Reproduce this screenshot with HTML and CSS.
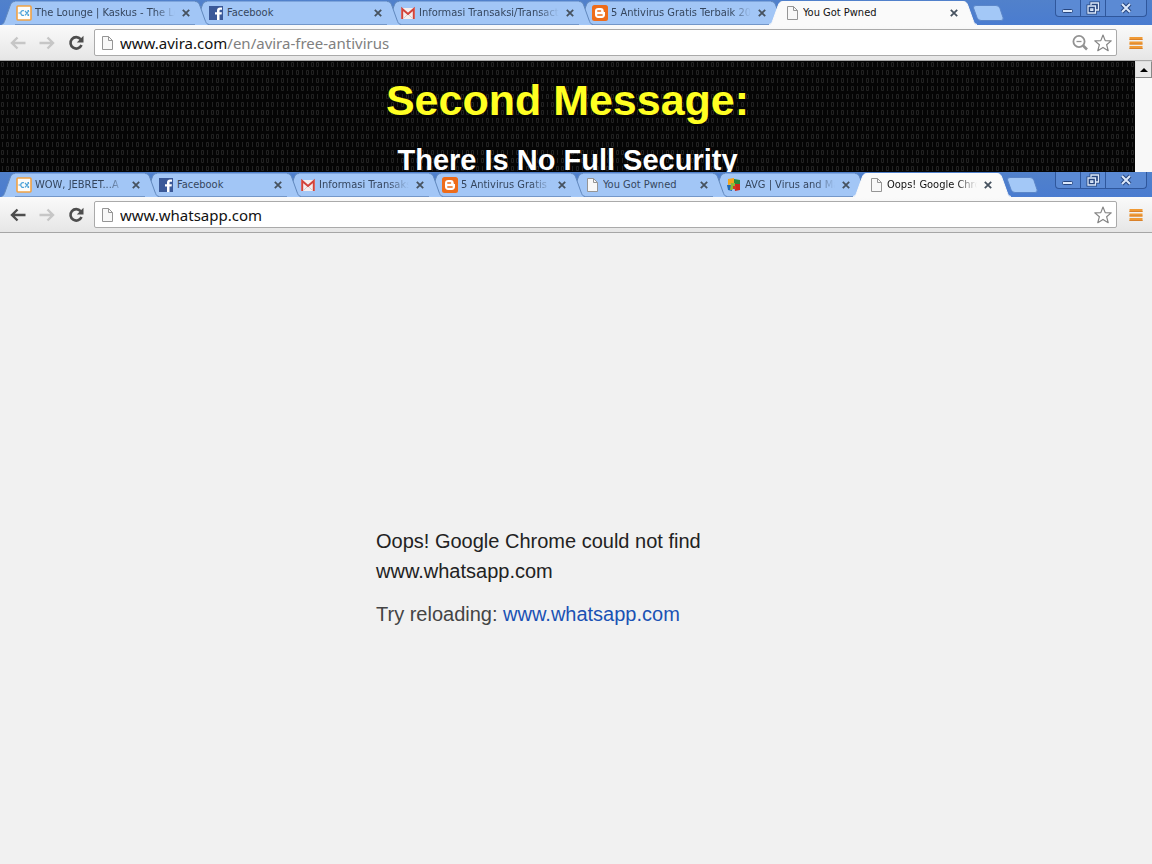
FILE: index.html
```
<!DOCTYPE html>
<html lang="en">
<head>
    <meta charset="UTF-8">
    <meta name="viewport" content="width=device-width, initial-scale=1.0">
    <title>Oops! Google Chrome could not find www.whatsapp.com</title>
    <link rel="stylesheet" href="styles.css">
</head>
<body>
    <!-- Shared icons -->
    <svg class="defs" aria-hidden="true">
        <symbol id="cap-left" viewBox="0 0 14 24">
            <path class="cap-fill" d="M0 24C3 23 3 21 4 19L9 5C10 2 11 .5 14 .5V24z"/>
            <path class="cap-line" d="M0 23.5C3 23 3 21 4 19L9 5C10 2 11 .5 14 .5"/>
        </symbol>
        <symbol id="cap-right" viewBox="0 0 14 24">
            <path class="cap-fill" d="M14 24C11 23 11 21 10 19L5 5C4 2 3 .5 0 .5V24z"/>
            <path class="cap-line" d="M14 23.5C11 23 11 21 10 19L5 5C4 2 3 .5 0 .5"/>
        </symbol>
        <symbol id="kaskus" viewBox="0 0 16 16">
            <rect x="1" y="1" width="14" height="14" rx="1" fill="#fdfdfb" stroke="#f0a245" stroke-width="1.6"/>
            <path d="M2.500 8h2M8 5.800C6 5 4.800 6.500 4.800 8S6 11 8 10.200M9 6l4 4.300M13 5.700L9 10.300M11.500 5.700H13M11.500 10.300H13" fill="none" stroke="#4da3d9" stroke-width="1.200"/>
        </symbol>
        <symbol id="facebook" viewBox="0 0 16 16">
            <rect x="1" y="1" width="14" height="14" fill="#3b5998"/>
            <path d="M9 15V9.500H7V7.300h2V5.600C9 3.500 10.200 2.500 12 2.500h2v2.200h-1.300c-.9 0-1.200.4-1.200 1.200v1.400h2.400l-.3 2.200h-2.100V15z" fill="#fff"/>
        </symbol>
        <symbol id="gmail" viewBox="0 0 16 16">
            <rect x="1" y="3" width="14" height="11" fill="#f4eeee"/>
            <path d="M4 13l4-4 4 4" fill="none" stroke="#d5cccc"/>
            <path d="M2.200 14V4L8 9l5.800-5v10" fill="none" stroke="#d2433a" stroke-width="2"/>
        </symbol>
        <symbol id="blogger" viewBox="0 0 16 16">
            <rect width="16" height="16" rx="2.500" fill="#ee6c1a"/>
            <path d="M6.200 3h2.600c1.800 0 2.900 1.300 2.900 2.900 0 .9.300 1.100 1.300 1.200v2.700c0 2-1.200 3.200-3.200 3.200H6.200C4.200 13 3 11.800 3 9.800V6.200C3 4.200 4.200 3 6.200 3z" fill="#fff"/>
            <path d="M5.800 6h2.700M5.800 9.900h4.300" stroke="#ee6c1a" stroke-width="1.500" stroke-linecap="round"/>
        </symbol>
        <symbol id="page" viewBox="0 0 16 16">
            <path d="M3.500 1.500h6l4 4v9h-10z" fill="#f8f8f8" stroke="#959595"/>
            <path d="M9.500 1.500v4h4" fill="none" stroke="#959595"/>
        </symbol>
        <symbol id="avg" viewBox="0 0 16 16">
            <path d="M2 2l6-1v6L2 8z" fill="#f3a51d"/>
            <path d="M8 2l6 1v5L8 7z" fill="#2b8a3b"/>
            <path d="M1 8h5v6l-4-1z" fill="#1d68b5"/>
            <path d="M8 7h6v6l-5 1z" fill="#cf2a1d"/>
            <path d="M5 6h4v4l-3 3H4z" fill="#8dbb37"/>
            <path d="M7 9h3v3H7z" fill="#d83620"/>
        </symbol>
        <symbol id="close" viewBox="0 0 10 10">
            <path d="M1.800 1.800l6.400 6.400M8.200 1.800l-6.400 6.400" stroke="#46525f" stroke-width="1.800"/>
        </symbol>
        <symbol id="back" viewBox="0 0 16 16">
            <path d="M15.500 8H2M7.500 2.500L2 8l5.500 5.500" fill="none" stroke="currentColor" stroke-width="2.400"/>
        </symbol>
        <symbol id="forward" viewBox="0 0 16 16">
            <path d="M.5 8H14M8.500 2.500L14 8l-5.500 5.500" fill="none" stroke="currentColor" stroke-width="2.400"/>
        </symbol>
        <symbol id="reload" viewBox="0 0 16 16">
            <path d="M12.600 4.200A5.700 5.700 0 1 0 13.500 10" fill="none" stroke="currentColor" stroke-width="2.600"/>
            <path d="M15.500.8v6.700H8.800z" fill="currentColor"/>
        </symbol>
        <symbol id="zoom-out" viewBox="0 0 18 18">
            <circle cx="8" cy="7.500" r="5.600" fill="none" stroke="#929292" stroke-width="1.800"/>
            <path d="M5.500 7.500h5" stroke="#929292" stroke-width="1.300"/>
            <path d="M12 11.500l4 4" stroke="#929292" stroke-width="2.600"/>
        </symbol>
        <symbol id="star" viewBox="0 0 18 18">
            <path d="M9 1l2.200 5.600 6 .3-4.600 3.800 1.600 6L9 13.400l-5.200 3.300 1.600-6L.8 6.900l6-.3z" fill="#fff" stroke="#858585" stroke-width="1.200" stroke-linejoin="round"/>
        </symbol>
        <symbol id="menu" viewBox="0 0 14 14">
            <path d="M.5 2.500h13M.5 7h13M.5 11.500h13" stroke="#f09a35" stroke-width="3"/>
            <path d="M.5 3.500h13M.5 8h13M.5 12.500h13" stroke="#d9812a"/>
        </symbol>
        <symbol id="win-min" viewBox="0 0 14 14">
            <rect x="1.500" y="8.500" width="10" height="3" rx="1" fill="#dce9fb" stroke="#27467f"/>
        </symbol>
        <symbol id="win-restore" viewBox="0 0 14 14">
            <path d="M5 4V2h7.500v7H10M2 5h7.500v7H2zM4.800 7.800h2v1.500h-2z" fill="none" stroke="#27467f" stroke-width="3"/>
            <path d="M5 4V2h7.500v7H10M2 5h7.500v7H2zM4.800 7.800h2v1.500h-2z" fill="none" stroke="#dce9fb" stroke-width="1.300"/>
        </symbol>
        <symbol id="win-close" viewBox="0 0 14 14">
            <path d="M3 3l8 8M11 3l-8 8" stroke="#27467f" stroke-width="4"/>
            <path d="M3 3l8 8M11 3l-8 8" stroke="#dce9fb" stroke-width="2"/>
        </symbol>
        <symbol id="new-tab" viewBox="0 0 32 16">
            <path d="M4 .5h20q3 0 4 3l3 9q1 3-2 3H9q-3 0-4-3L1.500 3Q1 .5 4 .5z" fill="#a3c8f7" stroke="#5b86c9"/>
        </symbol>
    </svg>

    <section class="window">
        <div class="strip">
            <div class="tabs">
                <div class="tab">
                    <svg class="cap"><use href="#cap-left"/></svg>
                    <div class="tab-body">
                        <svg class="favicon"><use href="#kaskus"/></svg>
                        <span class="title fade">The Lounge | Kaskus - The Lo</span>
                        <button class="close" aria-label="Close tab"><svg><use href="#close"/></svg></button>
                    </div>
                    <svg class="cap"><use href="#cap-right"/></svg>
                </div>
                <div class="tab">
                    <svg class="cap"><use href="#cap-left"/></svg>
                    <div class="tab-body">
                        <svg class="favicon"><use href="#facebook"/></svg>
                        <span class="title">Facebook</span>
                        <button class="close" aria-label="Close tab"><svg><use href="#close"/></svg></button>
                    </div>
                    <svg class="cap"><use href="#cap-right"/></svg>
                </div>
                <div class="tab">
                    <svg class="cap"><use href="#cap-left"/></svg>
                    <div class="tab-body">
                        <svg class="favicon"><use href="#gmail"/></svg>
                        <span class="title fade">Informasi Transaksi/Transact</span>
                        <button class="close" aria-label="Close tab"><svg><use href="#close"/></svg></button>
                    </div>
                    <svg class="cap"><use href="#cap-right"/></svg>
                </div>
                <div class="tab">
                    <svg class="cap"><use href="#cap-left"/></svg>
                    <div class="tab-body">
                        <svg class="favicon"><use href="#blogger"/></svg>
                        <span class="title fade">5 Antivirus Gratis Terbaik 20</span>
                        <button class="close" aria-label="Close tab"><svg><use href="#close"/></svg></button>
                    </div>
                    <svg class="cap"><use href="#cap-right"/></svg>
                </div>
                <div class="tab active">
                    <svg class="cap"><use href="#cap-left"/></svg>
                    <div class="tab-body">
                        <svg class="favicon"><use href="#page"/></svg>
                        <span class="title">You Got Pwned</span>
                        <button class="close" aria-label="Close tab"><svg><use href="#close"/></svg></button>
                    </div>
                    <svg class="cap"><use href="#cap-right"/></svg>
                </div>
                <button class="new-tab" aria-label="New tab"><svg><use href="#new-tab"/></svg></button>
            </div>
            <div class="controls">
                <button aria-label="Minimize"><svg><use href="#win-min"/></svg></button>
                <button aria-label="Restore"><svg><use href="#win-restore"/></svg></button>
                <button class="wide" aria-label="Close"><svg><use href="#win-close"/></svg></button>
            </div>
        </div>
        <div class="toolbar">
            <button class="nav off" aria-label="Back"><svg><use href="#back"/></svg></button>
            <button class="nav off" aria-label="Forward"><svg><use href="#forward"/></svg></button>
            <button class="nav" aria-label="Reload"><svg><use href="#reload"/></svg></button>
            <div class="address">
                <svg class="favicon"><use href="#page"/></svg>
                <a class="url" href="#">www.avira.com<span class="path">/en/avira-free-antivirus</span></a>
                <button aria-label="Zoom"><svg><use href="#zoom-out"/></svg></button>
                <button aria-label="Bookmark"><svg><use href="#star"/></svg></button>
            </div>
            <button class="menu" aria-label="Menu"><svg><use href="#menu"/></svg></button>
        </div>
        <div class="pwned">
            <div class="pwned-page">
                <svg class="binary" aria-hidden="true">
                    <defs>
                        <pattern id="bits" width="50" height="24" patternUnits="userSpaceOnUse">
                            <g fill="none" stroke="#222">
                                <path d="M1.500 1.500h2v4h-2zM11.500 1.500h2v4h-2zM16.500 1.500h2v4h-2zM31.500 1.500h2v4h-2zM41.500 1.500h2v4h-2zM6.500 9.500h2v4h-2zM11.500 9.500h2v4h-2zM26.500 9.500h2v4h-2zM36.500 9.500h2v4h-2zM46.500 9.500h2v4h-2zM1.500 17.500h2v4h-2zM16.500 17.500h2v4h-2zM21.500 17.500h2v4h-2zM31.500 17.500h2v4h-2zM41.500 17.500h2v4h-2z"/>
                                <path d="M7.500 1v5M22.500 1v5M27.500 1v5M37.500 1v5M47.500 1v5M2.500 9v5M17.500 9v5M22.500 9v5M32.500 9v5M42.500 9v5M7.500 17v5M12.500 17v5M27.500 17v5M37.500 17v5M47.500 17v5"/>
                            </g>
                        </pattern>
                    </defs>
                    <rect width="100%" height="100%" fill="url(#bits)"/>
                </svg>
                <h1>Second Message:</h1>
                <h2>There Is No Full Security</h2>
            </div>
            <div class="scrollbar">
                <button aria-label="Scroll up"><svg viewBox="0 0 8 4"><path d="M0 4l4-4 4 4z"/></svg></button>
            </div>
        </div>
    </section>

    <section class="window front">
        <div class="strip">
            <div class="tabs">
                <div class="tab">
                    <svg class="cap"><use href="#cap-left"/></svg>
                    <div class="tab-body">
                        <svg class="favicon"><use href="#kaskus"/></svg>
                        <span class="title fade">WOW, JEBRET...A</span>
                        <button class="close" aria-label="Close tab"><svg><use href="#close"/></svg></button>
                    </div>
                    <svg class="cap"><use href="#cap-right"/></svg>
                </div>
                <div class="tab">
                    <svg class="cap"><use href="#cap-left"/></svg>
                    <div class="tab-body">
                        <svg class="favicon"><use href="#facebook"/></svg>
                        <span class="title">Facebook</span>
                        <button class="close" aria-label="Close tab"><svg><use href="#close"/></svg></button>
                    </div>
                    <svg class="cap"><use href="#cap-right"/></svg>
                </div>
                <div class="tab">
                    <svg class="cap"><use href="#cap-left"/></svg>
                    <div class="tab-body">
                        <svg class="favicon"><use href="#gmail"/></svg>
                        <span class="title fade">Informasi Transaks</span>
                        <button class="close" aria-label="Close tab"><svg><use href="#close"/></svg></button>
                    </div>
                    <svg class="cap"><use href="#cap-right"/></svg>
                </div>
                <div class="tab">
                    <svg class="cap"><use href="#cap-left"/></svg>
                    <div class="tab-body">
                        <svg class="favicon"><use href="#blogger"/></svg>
                        <span class="title fade">5 Antivirus Gratis T</span>
                        <button class="close" aria-label="Close tab"><svg><use href="#close"/></svg></button>
                    </div>
                    <svg class="cap"><use href="#cap-right"/></svg>
                </div>
                <div class="tab">
                    <svg class="cap"><use href="#cap-left"/></svg>
                    <div class="tab-body">
                        <svg class="favicon"><use href="#page"/></svg>
                        <span class="title">You Got Pwned</span>
                        <button class="close" aria-label="Close tab"><svg><use href="#close"/></svg></button>
                    </div>
                    <svg class="cap"><use href="#cap-right"/></svg>
                </div>
                <div class="tab">
                    <svg class="cap"><use href="#cap-left"/></svg>
                    <div class="tab-body">
                        <svg class="favicon"><use href="#avg"/></svg>
                        <span class="title fade">AVG | Virus and Ma</span>
                        <button class="close" aria-label="Close tab"><svg><use href="#close"/></svg></button>
                    </div>
                    <svg class="cap"><use href="#cap-right"/></svg>
                </div>
                <div class="tab active">
                    <svg class="cap"><use href="#cap-left"/></svg>
                    <div class="tab-body">
                        <svg class="favicon"><use href="#page"/></svg>
                        <span class="title fade">Oops! Google Chro</span>
                        <button class="close" aria-label="Close tab"><svg><use href="#close"/></svg></button>
                    </div>
                    <svg class="cap"><use href="#cap-right"/></svg>
                </div>
                <button class="new-tab" aria-label="New tab"><svg><use href="#new-tab"/></svg></button>
            </div>
            <div class="controls">
                <button aria-label="Minimize"><svg><use href="#win-min"/></svg></button>
                <button aria-label="Restore"><svg><use href="#win-restore"/></svg></button>
                <button class="wide" aria-label="Close"><svg><use href="#win-close"/></svg></button>
            </div>
        </div>
        <div class="toolbar">
            <button class="nav" aria-label="Back"><svg><use href="#back"/></svg></button>
            <button class="nav off" aria-label="Forward"><svg><use href="#forward"/></svg></button>
            <button class="nav" aria-label="Reload"><svg><use href="#reload"/></svg></button>
            <div class="address">
                <svg class="favicon"><use href="#page"/></svg>
                <input class="url" type="text" value="www.whatsapp.com" aria-label="Address">
                <button aria-label="Bookmark"><svg><use href="#star"/></svg></button>
            </div>
            <button class="menu" aria-label="Menu"><svg><use href="#menu"/></svg></button>
        </div>
        <main class="error">
            <div class="message">
                <p>Oops! Google Chrome could not find www.whatsapp.com</p>
                <p class="retry">Try reloading: <a href="#">www.whatsapp.com</a></p>
            </div>
        </main>
    </section>
</body>
</html>
```
FILE: styles.css
```
* {
    box-sizing: border-box;
}

body {
    margin: 0;
    min-height: 100vh;
    display: flex;
    flex-direction: column;
    font-family: "Liberation Sans", Arial, sans-serif;
    background: #f1f1f1;
}

button {
    padding: 0;
    border: none;
    background: none;
    display: flex;
    align-items: center;
    justify-content: center;
    flex: none;
}

.defs {
    position: absolute;
    width: 0;
    height: 0;
}

.window {
    display: flex;
    flex-direction: column;
}

.front {
    flex: 1;
}

/* Tab strip */
.strip {
    display: flex;
    align-items: flex-start;
    height: 25px;
    padding: 0 5px 0 1px;
    background: linear-gradient(#5181cb, #4a7cd0);
}

.tabs {
    display: flex;
    flex: 1;
    min-width: 0;
    padding: 1px 17px 0 0;
}

.tab {
    display: flex;
    flex: 0 1 208px;
    min-width: 0;
    height: 24px;
    margin-right: -16px;
    position: relative;
    z-index: 1;
    color: #35465e;
}

.tab:nth-child(1) { z-index: 7; }
.tab:nth-child(2) { z-index: 6; }
.tab:nth-child(3) { z-index: 5; }
.tab:nth-child(4) { z-index: 4; }
.tab:nth-child(5) { z-index: 3; }
.tab:nth-child(6) { z-index: 2; }

.cap {
    flex: none;
    width: 14px;
    height: 24px;
    fill: #a2c6f6;
    stroke: #6188bd;
}

.cap-fill {
    stroke: none;
}

.cap-line {
    fill: none;
}

.tab-body {
    flex: 1;
    min-width: 0;
    display: flex;
    align-items: center;
    padding: 0 4px 0 1px;
    border-top: 1px solid #7ea5dc;
    border-bottom: 1px solid #7397c9;
    background: #a2c6f6;
}

.tab.active {
    z-index: 8;
    color: #111;
}

.active .cap {
    fill: #fafafa;
    stroke: #fafafa;
}

.active .tab-body {
    background: #fafafa;
    border-color: #fafafa;
}

.favicon {
    flex: none;
    width: 16px;
    height: 16px;
}

.title {
    flex: 1;
    min-width: 0;
    margin: 0 6px 0 3px;
    overflow: hidden;
    white-space: nowrap;
    font-family: "DejaVu Sans Condensed", "Noto Sans", sans-serif;
    font-size: 11px;
    line-height: 16px;
}

.fade {
    -webkit-mask-image: linear-gradient(to left, transparent, #000 20px);
    mask-image: linear-gradient(to left, transparent, #000 20px);
}

.close svg {
    width: 10px;
    height: 10px;
}

.new-tab {
    height: 24px;
    margin-left: 11px;
}

.new-tab svg {
    width: 32px;
    height: 16px;
}

.controls {
    display: flex;
    height: 17px;
    border: 1px solid #2f579c;
    border-top: none;
    border-radius: 0 0 4px 4px;
    background: #5b8ad4;
}

.controls button {
    width: 25px;
    border-right: 1px solid #2f579c;
}

.controls .wide {
    width: 40px;
    border-right: none;
}

.controls svg {
    width: 14px;
    height: 14px;
}

/* Toolbar */
.toolbar {
    display: flex;
    align-items: center;
    height: 36px;
    padding: 0 9px 0 3px;
    border-bottom: 1px solid #a6a6a6;
    background: linear-gradient(#fafafa, #e6e6e6);
}

.nav {
    width: 29px;
    height: 28px;
    color: #4d4d4d;
}

.nav.off {
    color: #c6c6c6;
}

.nav svg {
    width: 16px;
    height: 16px;
}

.address {
    flex: 1;
    min-width: 0;
    display: flex;
    align-items: center;
    gap: 5px;
    height: 27px;
    margin-left: 4px;
    padding: 0 4px;
    border: 1px solid #aaa;
    border-radius: 2px;
    background: #fff;
}

.address button svg {
    width: 18px;
    height: 18px;
}

.url {
    flex: 1;
    min-width: 0;
    padding: 0;
    border: none;
    outline: none;
    overflow: hidden;
    white-space: nowrap;
    text-decoration: none;
    font-family: "Noto Sans", sans-serif;
    font-size: 15px;
    line-height: 22px;
    color: #111;
}

.path {
    color: #808080;
}

.menu {
    width: 14px;
    height: 28px;
    margin-left: 12px;
}

.menu svg {
    width: 14px;
    height: 14px;
}

/* Page in the back window */
.pwned {
    display: flex;
    height: 111px;
    overflow: hidden;
}

.pwned-page {
    flex: 1;
    position: relative;
    background: #050505;
    text-align: center;
}

.binary {
    position: absolute;
    left: 0;
    top: 0;
    width: 100%;
    height: 100%;
}

.pwned h1 {
    position: relative;
    margin: 14px 0 0;
    font-size: 43px;
    line-height: 50px;
    color: #ff2;
}

.pwned h2 {
    position: relative;
    margin: 18px 0 0;
    font-size: 29px;
    line-height: 34px;
    color: #fff;
}

.scrollbar {
    width: 17px;
    background: #f8f8f8;
}

.scrollbar button {
    width: 17px;
    height: 17px;
    border: 1px solid #888;
    border-top-color: #ddd;
    border-left-color: #ddd;
    background: #e8e8e8;
}

.scrollbar svg {
    width: 8px;
    height: 4px;
}

/* Error page */
.error {
    flex: 1;
    display: flex;
    align-items: center;
    justify-content: center;
    padding-top: 58px;
}

.message {
    width: 400px;
    max-width: 100%;
    font-size: 20px;
    line-height: 30px;
    color: #222;
}

.message p {
    margin: 0;
}

.message .retry {
    margin-top: 13px;
    color: #444;
}

.message a {
    color: #1a52b4;
    text-decoration: none;
}
```
